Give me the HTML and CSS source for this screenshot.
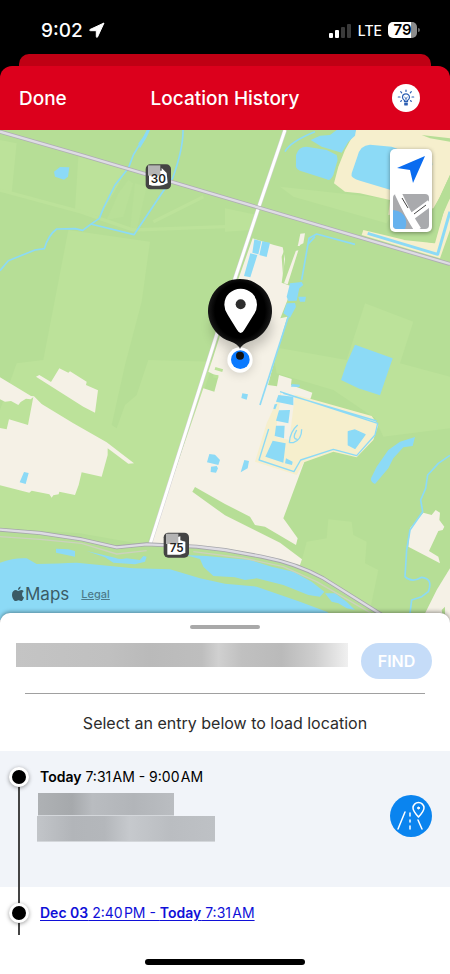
FILE: index.html
```
<!DOCTYPE html>
<html lang="en">
<head>
    <meta charset="UTF-8">
    <meta name="viewport" content="width=device-width, initial-scale=1.0">
    <title>Location History</title>
    <link rel="stylesheet" href="styles.css">
</head>
<body>
    <div class="status-bar">
        <div class="status-left">
            <span class="clock">9:02</span>
            <svg width="16" height="16" viewBox="0 0 16 16"><path d="M15 1 L1 7.500 Q0 8.500 1.500 8.700 L7.300 8.700 L7.300 14.500 Q7.600 16 8.500 15 Z" fill="#fff" stroke="#fff" stroke-linejoin="round"/></svg>
        </div>
        <div class="status-right">
            <svg width="24" height="16" viewBox="0 0 24 16">
                <rect x="1" y="11" width="4" height="5" rx="1" fill="#fff"/>
                <rect x="7" y="8" width="4" height="8" rx="1" fill="#fff"/>
                <rect x="13" y="5" width="4" height="11" rx="1" fill="#3a3a3a"/>
                <rect x="19" y="2" width="4" height="14" rx="1" fill="#3a3a3a"/>
            </svg>
            <span class="network">LTE</span>
            <span class="battery">79</span>
        </div>
    </div>

    <div class="card-behind"></div>

    <header class="header">
        <button type="button" class="done-button">Done</button>
        <h1>Location History</h1>
        <button type="button" class="tips-button" aria-label="Tips">
            <svg width="18" height="18" viewBox="0 0 18 18" fill="none" stroke="#2c5fb3" stroke-width="1.200" stroke-linecap="round">
                <path d="M7.500 12.500 V11.500 Q5.500 10.500 5.500 8.300 A3.500 3.500 0 0 1 12.500 8.300 Q12.500 10.500 10.500 11.500 V12.500 Z"/>
                <path d="M7.800 14.200 H10.200 M7.800 15.800 H10.200" stroke-width="1.600"/>
                <path d="M9 1 V2.400 M3.700 2.700 L4.700 3.900 M14.300 2.700 L13.300 3.900 M1.300 8 H3 M15 8 H16.700 M3.700 12.300 L4.500 11.700 M14.300 12.300 L13.500 11.700"/>
                <path d="M7.700 8.300 L9 9.500 L10.300 8.300 M9 9.500 V12" stroke-width="0.900"/>
            </svg>
        </button>
    </header>

    <main>
        <section class="map" aria-label="Map">
            <svg class="map-canvas" viewBox="0 0 1350 1470">
                <defs>
                    <radialGradient id="ball" cx="0.5" cy="0.45" r="0.56">
                        <stop offset="0" stop-color="#000"/>
                        <stop offset="0.700" stop-color="#000"/>
                        <stop offset="0.900" stop-color="#1a1a1a"/>
                        <stop offset="1" stop-color="#3a3a3a"/>
                    </radialGradient>
                    <filter id="soft" x="-50%" y="-50%" width="200%" height="200%">
                        <feGaussianBlur stdDeviation="18"/>
                    </filter>
                </defs>
                <rect width="1350" height="1470" fill="#b6de96"/>

                <!-- lighter fields -->
                <g fill="#bce29a">
                    <path d="M205 300 L450 335 L425 515 L375 705 L335 885 L350 895 L375 825 L410 795 L440 705 L445 690 L640 695 L600 820 L440 1245 L240 1210 L0 1195 V840 L50 700 L130 690 Z"/>
                    <path d="M0 30 L50 40 L35 190 L0 180 Z M235 80 L380 120 L300 260 L225 240 Z"/>
                    <path d="M1095 520 L1240 575 L1200 700 L1350 740 V895 L1190 915 L1150 920 L1125 865 L1000 780 L830 730 L815 650 L1040 690 Z"/>
                    <path d="M985 1168 L1055 1175 L1060 1215 L1100 1235 L1095 1300 L1135 1320 L1110 1440 L900 1310 L920 1235 L980 1225 Z"/>
                    <path d="M675 235 L770 255 L755 300 L675 305 Z M840 170 L1200 210 L1160 280 L880 200 Z"/>
                </g>
                <path d="M355 190 L385 150 L400 160 L370 260 L320 270 Z M405 160 L440 170 L410 300 L390 300 Z" fill="#b9e098"/>
                <path d="M0 180 L240 245 L400 300 L675 290 M460 275 L610 200" fill="none" stroke="#bce29a" stroke-width="10"/>

                <!-- built-up land -->
                <g fill="#f5f1e6">
                    <path d="M108 740 L118 735 L153 756 L178 715 L205 728 L210 724 L260 755 L258 765 L294 781 L285 848 L250 830 Z"/>
                    <path d="M0 742 L93 798 L102 799 L125 822 L220 880 L320 937 L402 1000 L385 1001 L323 955 L323 975 L305 1040 L245 1027 L236 1065 L225 1095 L178 1085 L176 1093 L160 1096 L155 1103 L148 1093 L95 1082 L88 1088 L0 1066 V894 L20 898 L27 868 L84 885 L100 801 L92 808 L78 806 L62 816 L55 825 L33 813 L15 815 L0 808 Z"/>
                    <path d="M758 325 L822 345 L848 352 L855 387 L845 458 L878 470 L841 565 L862 560 L816 720 L804 765 L831 769 L837 735 L875 747 L873 765 L937 788 L933 802 L895 890 L915 990 L850 1165 L893 1225 L888 1245 L795 1190 L765 1185 L750 1160 L675 1122 L585 1071 L577 1085 L675 1156 L840 1238 L906 1288 L900 1305 L675 1262 L450 1243 L610 775 L643 785 L655 740 L625 725 L640 680 L700 490 Z"/>
                    <path d="M901 311 L915 310 L910 340 L900 345 L863 463 L852 460 L894 345 Z"/>
                    <path d="M1270 1148 L1295 1155 L1307 1140 L1320 1148 L1318 1170 L1333 1190 L1328 1200 L1315 1203 L1287 1263 L1315 1280 L1320 1300 L1225 1250 L1230 1195 Z"/>
                    <path d="M1350 1315 L1310 1380 L1265 1470 H1350 Z"/>
                </g>
                <path d="M645 715 L668 722 M640 738 L655 740" stroke="#bce29a" stroke-width="9"/>

                <!-- sand -->
                <g fill="#f6efcd">
                    <path d="M1068 0 H1350 V135 L1320 200 L1300 235 L1165 255 L1170 210 L1080 190 L1035 185 L1002 160 L1015 110 L1035 60 Z"/>
                    <path d="M1350 205 L1340 220 L1300 340 L1230 325 L1215 330 L1090 300 L1085 315 L1320 385 L1350 300 Z"/>
                    <path d="M845 782 L1115 858 L1135 885 L1120 930 L1070 982 L1000 965 L912 997 L890 1035 L765 995 L800 880 Z"/>
                </g>
                <g fill="#b6de96">
                    <path d="M1265 15 L1350 25 V35 L1290 25 Z"/>
                    <path d="M1302 238 L1350 135 V205 L1330 250 L1305 340 L1210 330 Z"/>
                    <path d="M845 380 L853 360 L850 450 Z M888 348 L905 348 L900 360 L888 362 Z"/>
                    <path d="M1330 1470 L1325 1440 L1335 1430 V1470 Z"/>
                </g>
                <path d="M845 780 L885 792 L878 850 L868 930 L825 920 Z" fill="#f5f1e6"/>

                <!-- rivers and ponds -->
                <g fill="#8cdaf6">
                    <path d="M0 1298 Q45 1282 80 1285 L110 1302 Q180 1300 230 1298 L400 1315 L510 1318 L600 1345 L675 1361 L770 1370 L900 1415 L980 1445 L1020 1470 H0 Z"/>
                    <path d="M555 1275 L620 1278 L750 1290 L815 1310 L880 1325 L935 1355 L973 1385 L960 1400 L925 1395 L850 1365 L770 1345 L735 1350 L705 1342 L640 1338 L610 1310 L600 1287 Z"/>
                    <path d="M975 1390 L1005 1390 L1040 1415 L1065 1440 L1040 1435 L1015 1420 L995 1415 Z"/>
                    <path d="M168 1256 L205 1258 L225 1263 V1280 L168 1268 Z M260 1263 L345 1283 Q360 1290 380 1285 L420 1290 L430 1278 L440 1280 L435 1295 L405 1303 L340 1298 L315 1282 Z"/>
                    <path d="M162 125 L180 111 L208 112 L204 140 L192 149 L165 140 Z"/>
                    <path d="M932 30 L960 17 L990 15 L1010 0 H1068 L1065 17 L1045 35 L1025 68 L965 50 Z"/>
                    <path d="M888 75 Q895 50 920 50 L980 60 L1010 75 Q1015 90 1010 100 L1000 135 Q990 155 980 148 L900 122 Q885 118 888 100 Z"/>
                    <path d="M1072 80 Q1080 45 1110 44 L1175 50 L1296 95 L1297 105 L1185 184 L1080 152 Q1050 145 1055 130 Z"/>
                    <path d="M763 328 L784 334 L775 373 L757 368 Z M787 334 L810 338 L800 381 L778 375 Z M751 370 L772 375 L751 442 L732 438 Z"/>
                    <path d="M870 460 L905 456 L910 465 L898 475 L890 512 L865 513 L860 500 Z M895 500 L918 500 L915 515 L900 515 Z M860 520 L885 519 L888 530 L870 563 L850 550 Z"/>
                    <path d="M1065 644 L1178 685 L1140 796 L1075 775 L1023 750 L1040 700 Z"/>
                    <path d="M72 1026 L86 1029 L77 1062 L59 1057 Z M628 972 L645 974 L660 990 L655 1005 L621 997 Z M633 1010 L650 1008 L654 1015 L648 1028 L632 1026 Z"/>
                    <path d="M727 790 L744 793 L740 809 L724 804 Z M733 990 L747 993 L743 1015 L722 1027 Z M875 762 L900 764 L898 771 L873 770 Z"/>
                    <path d="M835 795 L880 800 L880 826 L828 815 Z M837 841 L870 840 L865 880 L828 872 Z M828 887 L854 887 L852 925 L824 918 Z M818 932 L857 940 L850 998 L796 980 Z M858 985 L878 995 L876 1005 L855 1000 Z M824 823 L832 822 L826 838 L820 836 Z"/>
                    <path d="M1045 905 L1065 900 L1095 914 L1065 955 L1045 945 Z" stroke="#8cdaf6" stroke-width="4" stroke-linejoin="round"/>
                    <path d="M1245 921 L1238 948 L1210 952 L1180 985 L1165 1015 L1125 1062 Q1110 1055 1113 1045 L1130 1010 L1165 960 L1200 935 Z"/>
                    <path d="M415 40 L430 20 L440 0 H450 L440 22 L420 55 Z"/>
                </g>
                <g fill="none" stroke="#8cdaf6" stroke-width="5" stroke-linejoin="round">
                    <path d="M445 0 L415 50 L400 75 L385 115 L345 165 L310 235 L298 265 L272 283 L248 301 L225 296 L170 297 Q145 315 133 356 L105 360 L25 392 L0 422"/>
                    <path d="M549 0 Q550 55 518 145 L490 183 L402 314 L272 282"/>
                    <path d="M855 65 Q870 35 945 5"/>
                    <path d="M1065 343 L950 312 L927 325 L905 450 M945 320 L922 345"/>
                    <path d="M1103 310 L1313 373 L1350 245" stroke-width="9"/>
                    <path d="M865 560 L780 825"/>
                    <path d="M840 785 L1133 880 L1125 915 L1070 977 L1000 958 L902 990 L882 1025 L777 990 L806 897 M850 790 L1130 873" stroke-width="4"/>
                    <path d="M868 938 Q870 905 893 885 M905 898 Q905 930 880 938 L868 938 M885 910 Q878 928 892 928 M890 900 L883 915" stroke-width="4"/>
                    <path d="M1350 976 L1315 1000 L1283 1035 L1277 1075 L1262 1110 L1268 1145 L1230 1200 L1220 1260 L1215 1340 Q1235 1360 1265 1342 Q1300 1345 1285 1385 L1265 1400 L1235 1410 L1230 1450 L1240 1470"/>
                </g>

                <!-- roads -->
                <g fill="none" stroke-linejoin="round">
                    <path d="M0 1220 L120 1228 L245 1240 L350 1272 L440 1262 M580 1265 L730 1284 L850 1310 L950 1355 L1110 1448 L1140 1470" stroke="#ccd2bd" stroke-width="4"/>
                    <path d="M855 0 L775 235 L680 520 L450 1243" stroke="#d3d1d6" stroke-width="12"/>
                    <path d="M855 0 L775 235 L680 520 L450 1243" stroke="#fff" stroke-width="9"/>
                    <path d="M0 5 L250 77 L675 203 L1350 402" stroke="#b0adb5" stroke-width="12"/>
                    <path d="M0 5 L250 77 L675 203 L1350 402" stroke="#dedce4" stroke-width="7"/>
                    <path d="M0 1199 L120 1209 L245 1228 L350 1252 L440 1243 L590 1250 L675 1260 L785 1280 Q890 1300 970 1345 L1170 1470" stroke="#a6a7ab" stroke-width="12"/>
                    <path d="M0 1199 L120 1209 L245 1228 L350 1252 L440 1243 L590 1250 L675 1260 L785 1280 Q890 1300 970 1345 L1170 1470" stroke="#dedce4" stroke-width="7"/>
                </g>

                <!-- route shields -->
                <g class="shield">
                    <rect x="437" y="103" width="76" height="75" rx="14" fill="#444"/>
                    <path d="M447 129 H455 L462 122 H485 V114 L500 129 L503 159 Q488 168 475 167 Q462 169 447 164 Z" fill="#fff"/>
                    <rect x="444" y="106" width="37" height="31" fill="#b4b4b4"/>
                    <text x="475" y="160" text-anchor="middle">30</text>
                </g>
                <g class="shield">
                    <rect x="491" y="1208" width="76" height="75" rx="14" fill="#444"/>
                    <path d="M502 1236 H533 V1221 L541 1219 V1231 L556 1235 V1269 L540 1274 H502 Z" fill="#fff"/>
                    <rect x="498" y="1211" width="37" height="31" fill="#b4b4b4"/>
                    <text x="530" y="1265" text-anchor="middle">75</text>
                </g>

                <!-- current position and pin -->
                <ellipse cx="725" cy="590" rx="90" ry="70" fill="#000" opacity="0.200" filter="url(#soft)"/>
                <circle cx="720" cy="692" r="36" fill="#000" opacity="0.200" filter="url(#soft)"/>
                <circle cx="720" cy="690" r="38" fill="#fff"/>
                <circle cx="721" cy="689" r="28" fill="#0a7aff"/>
                <circle cx="720" cy="677" r="12" fill="#111"/>
                <path d="M720 657 Q714 642 690 634 A96 96 0 1 1 750 634 Q726 642 720 657 Z" fill="url(#ball)"/>
                <path d="M722 609 Q716 609 710 598 L684 556 Q673 540 673 524 A49 48 0 0 1 771 524 Q771 540 760 556 L734 598 Q728 609 722 609 Z" fill="#fff"/>
                <circle cx="722" cy="523" r="15" fill="#2d2d2d"/>
            </svg>

            <div class="map-controls">
                <button type="button" aria-label="My location">
                    <svg width="42" height="42" viewBox="0 0 42 42"><path d="M35 7 L7 19 L20 21 L23 34 Z" fill="#0a6cf0"/></svg>
                </button>
                <button type="button" aria-label="Map type">
                    <svg width="42" height="41" viewBox="0 0 42 41">
                        <rect x="3" y="3" width="36" height="35" rx="4" fill="#a9aaad"/>
                        <path d="M3 19 Q14 20 16 29 Q17 34 15 38 H7 Q3 38 3 34 Z" fill="#66b2ee"/>
                        <path d="M8 2 Q18 24 28 39 M21 26 L40 12" stroke="#fff" stroke-width="7" fill="none"/>
                        <path d="M12 7 L18 17 M24 23 L36 14" stroke="#444" stroke-width="1" fill="none"/>
                    </svg>
                </button>
            </div>

            <div class="attribution">
                <span class="maps-logo">
                    <svg width="12" height="16" viewBox="0 0 12 16" fill="#3b5b66">
                        <path d="M6 5 C7 5 8 4 9.300 4 Q11 4 11.700 5.300 Q10 6.500 10 8.300 Q10 10.500 12 11.400 Q10.700 15 9 15 Q8 15 7.500 14.600 Q6.300 14.100 5 14.700 Q4.300 15 3.600 15 C1.800 15 0 11.800 0 8.700 C0 5.500 2 4 3.700 4 Q4.700 4 6 5 Z"/>
                        <path d="M6 3.900 Q5.900 1.200 8.600 0.500 Q8.700 3.300 6 3.900 Z"/>
                    </svg>Maps</span>
                <a href="#" class="legal">Legal</a>
            </div>
        </section>

        <section class="sheet">
            <div class="handle"></div>
            <form class="search">
                <input type="text" class="address" aria-label="Address">
                <button type="button" class="find-button">FIND</button>
            </form>
            <hr>
            <p class="hint">Select an entry below to load location</p>

            <ul class="timeline">
                <li class="entry selected">
                    <div class="rail"><span class="dot"></span></div>
                    <div class="entry-text">
                        <p class="entry-time"><b>Today</b> 7:31&#8202;AM - 9:00&#8202;AM</p>
                        <div class="redacted short"></div>
                        <div class="redacted long"></div>
                    </div>
                    <button type="button" class="route-button" aria-label="Show route">
                        <svg width="42" height="42" viewBox="0 0 42 42" fill="none" stroke="#fff" stroke-width="1.500" stroke-linecap="round">
                            <path d="M15 17 L8 34 M28 25 L32 34"/>
                            <path d="M20 18 V21 M20 25 V27 M20 31 V34"/>
                            <path d="M28.500 22 Q23 16 23 13 A5.500 5.500 0 0 1 34 13 Q34 16 28.500 22 Z"/>
                            <circle cx="28.500" cy="13" r="1" fill="#fff" stroke-width="1"/>
                        </svg>
                    </button>
                </li>
                <li class="entry">
                    <div class="rail"><span class="dot"></span></div>
                    <div class="entry-text">
                        <a href="#" class="entry-time"><b>Dec 03</b> 2:40&#8202;PM - <b>Today</b> 7:31&#8202;AM</a>
                    </div>
                </li>
            </ul>
        </section>
    </main>

    <div class="home-indicator"></div>
</body>
</html>
```
FILE: styles.css
```
* {
    box-sizing: border-box;
}
body {
    margin: 0;
    /* black strip shows behind the rounded header corners */
    background: #fff linear-gradient(#000, #000) top / 100% 90px no-repeat;
    font-family: Inter, "Liberation Sans", sans-serif;
    color: #000;
}
button {
    margin: 0;
    padding: 0;
    border: none;
    background: none;
    font-family: inherit;
    cursor: pointer;
}
svg {
    display: block;
}
p {
    margin: 0;
}

/* status bar */
.status-bar {
    display: flex;
    justify-content: space-between;
    align-items: center;
    height: 54px;
    padding: 6px 33px 0 41px;
    background-color: #000;
    color: #fff;
}
.status-left, .status-right {
    display: flex;
    align-items: center;
    gap: 6px;
}
.clock {
    font-size: 19px;
    font-weight: 500;
}
.network {
    font-size: 14px;
    font-weight: 500;
}
.battery {
    position: relative;
    width: 29px;
    height: 16px;
    border-radius: 5px;
    background: linear-gradient(to right, #fff 79%, #8c8c8c 79%);
    color: #000;
    font-size: 15px;
    font-weight: 600;
    line-height: 16px;
    text-align: center;
}
.battery::after {
    content: "";
    position: absolute;
    right: -3px;
    top: 6px;
    width: 2px;
    height: 4px;
    border-radius: 0 2px 2px 0;
    background-color: #666;
}

/* header */
.card-behind {
    height: 12px;
    margin: 0 19px;
    border-radius: 10px 10px 0 0;
    background-color: #c00014;
}
.header {
    display: grid;
    grid-template-columns: 1fr auto 1fr;
    align-items: center;
    height: 64px;
    padding: 0 19px;
    border-radius: 12px 12px 0 0;
    background-color: #dc001c;
    color: #fff;
}
.header h1 {
    margin: 0;
    font-size: 19px;
    font-weight: 500;
}
.done-button {
    justify-self: start;
    color: #fff;
    font-size: 19px;
    font-weight: 500;
}
.tips-button {
    justify-self: end;
    display: flex;
    align-items: center;
    justify-content: center;
    width: 28px;
    height: 28px;
    margin-right: 11px;
    border-radius: 50%;
    background-color: #fff;
}

/* map */
.map {
    position: relative;
}
.map-canvas {
    width: 100%;
    height: auto;
}
.shield text {
    font-size: 35px;
    font-weight: 600;
    fill: #222;
}
.map-controls {
    position: absolute;
    top: 19px;
    right: 18px;
    border-radius: 5px;
    background-color: #fff;
    box-shadow: 0 1px 4px rgba(0,0,0,0.4);
}
.map-controls button {
    display: block;
}
.attribution {
    position: absolute;
    left: 12px;
    bottom: 16px;
    display: flex;
    align-items: center;
    gap: 12px;
    color: #3b5b66;
}
.maps-logo {
    display: flex;
    align-items: center;
    gap: 1px;
    font-size: 17px;
}
.legal {
    color: #4d7b8a;
    font-size: 11px;
    font-weight: 500;
}

/* bottom sheet */
.sheet {
    position: relative;
    margin-top: -7px;
    padding-top: 12px;
    border-radius: 10px 10px 0 0;
    background-color: #fff;
    box-shadow: 0 -1px 4px rgba(0,0,0,0.4);
    clip-path: inset(-8px 0 0 0);
}
.handle {
    width: 70px;
    height: 4px;
    margin: 0 auto;
    border-radius: 2px;
    background-color: #a9a9a9;
}
.search {
    display: flex;
    align-items: flex-start;
    gap: 13px;
    margin: 14px 18px;
}
.address {
    flex: 1;
    min-width: 0;
    height: 24px;
    margin-left: -2px;
    padding: 0;
    border: none;
    background: linear-gradient(to right, #c4c4c4, #c0c0c0 28%, #bababa 40%, #bebebe 56%, #d0d0d0 61%, #c0c0c0 68%, #bababa 80%, #cecece 90%, #f0f0f0);
}
.find-button {
    width: 71px;
    height: 36px;
    border-radius: 18px;
    background-color: #c5dcf8;
    color: #fff;
    font-size: 16px;
    font-weight: 600;
}
hr {
    height: 1px;
    margin: 0 25px;
    border: none;
    background-color: #a0a0a0;
}
.hint {
    padding: 18px 0 17px;
    color: #2c2c2c;
    font-size: 16px;
    line-height: 22px;
    text-align: center;
}

/* timeline */
.timeline {
    margin: 0;
    padding: 0;
    list-style: none;
}
.entry {
    display: flex;
    min-height: 48px;
    padding-right: 18px;
}
.entry.selected {
    min-height: 136px;
    background-color: #f1f4f9;
}
.rail {
    width: 38px;
    padding-top: 16px;
    background: linear-gradient(#444, #444) center / 2px 100% no-repeat;
}
.selected .rail {
    background-position: center bottom;
    background-size: 2px calc(100% - 20px);
}
.dot {
    display: block;
    width: 20px;
    height: 20px;
    margin: 0 auto;
    border: 3px solid #fff;
    border-radius: 50%;
    background-color: #000;
    box-shadow: 0 1px 4px rgba(0,0,0,0.4);
}
.entry-text {
    flex: 1;
    padding: 16px 0 0 2px;
}
.entry-time {
    display: block;
    font-size: 14px;
    line-height: 20px;
}
.entry-time b {
    font-weight: 600;
}
a.entry-time {
    color: #1010d8;
    text-underline-offset: 2px;
}
.redacted {
    border-bottom: 1px solid #d4d7db;
}
.short {
    width: 136px;
    height: 23px;
    margin: 6px 0 0 -2px;
    background: linear-gradient(to right, #aeb1b4, #a6a9ac 25%, #b9bcc0 40%, #b2b5b9 70%, #babdc1);
}
.long {
    width: 178px;
    height: 26px;
    margin-left: -3px;
    background: linear-gradient(to right, #c2c5c9, #b2b5b9 20%, #b4b7bb 38%, #c6c9cd 52%, #babdc1 75%, #bec1c5);
}
.route-button {
    align-self: flex-start;
    margin-top: 44px;
    border-radius: 50%;
    background-color: #0a84ef;
}

.home-indicator {
    width: 160px;
    height: 6px;
    margin: 24px auto 9px;
    border-radius: 3px;
    background-color: #000;
}
```
